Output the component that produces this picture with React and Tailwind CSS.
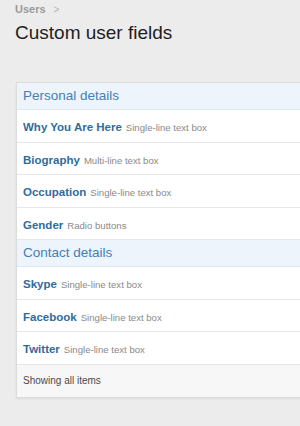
const groups = [
    {
        title: 'Personal details',
        fields: [
            { name: 'Why You Are Here', type: 'Single-line text box' },
            { name: 'Biography', type: 'Multi-line text box' },
            { name: 'Occupation', type: 'Single-line text box' },
            { name: 'Gender', type: 'Radio buttons' },
        ],
    },
    {
        title: 'Contact details',
        fields: [
            { name: 'Skype', type: 'Single-line text box' },
            { name: 'Facebook', type: 'Single-line text box' },
            { name: 'Twitter', type: 'Single-line text box' },
        ],
    },
]

export default function App() {
    return (
        <div className="w-[300px] h-[426px] bg-[#ececec] overflow-hidden font-['Liberation_Sans',Arial,sans-serif]">

            <div className="pl-[15px] pt-[2px] flex items-center gap-[8px] h-[16px] text-[11px] font-bold text-[#9a9a9a]">
                <span>Users</span>
                <span className="font-normal text-[10px] text-[#b0b0b0]">&gt;</span>
            </div>

            <h1 className="pl-[15px] mt-[5px] text-[19px] leading-[24px] text-[#1e1e1e]">Custom user fields</h1>

            <div className="ml-[16px] mt-[37px] w-[300px] bg-white border border-[#dcdcdc] border-r-0 shadow-[0_1px_2px_rgba(0,0,0,0.08)]">
                {groups.map(group => (
                    <section key={group.title}>
                        <h2 className="h-[27px] flex items-center px-[6px] bg-[#edf4fc] border-b border-[#dfe8f1] text-[13.5px] text-[#4580b2]">
                            {group.title}
                        </h2>
                        {group.fields.map(field => (
                            <div key={field.name} className="h-[32.5px] flex items-baseline pt-[9px] px-[6px] border-b border-[#e8e8e8] whitespace-nowrap">
                                <span className="text-[11.5px] font-bold text-[#2f6c9c]">{field.name}</span>
                                <span className="ml-[4px] text-[9.6px] text-[#8a8a8a]">{field.type}</span>
                            </div>
                        ))}
                    </section>
                ))}
                <div className="h-[32px] flex items-center px-[6px] bg-[#f7f7f7] text-[10px] text-[#4a4a4a]">
                    Showing all items
                </div>
            </div>

        </div>
    )
}
